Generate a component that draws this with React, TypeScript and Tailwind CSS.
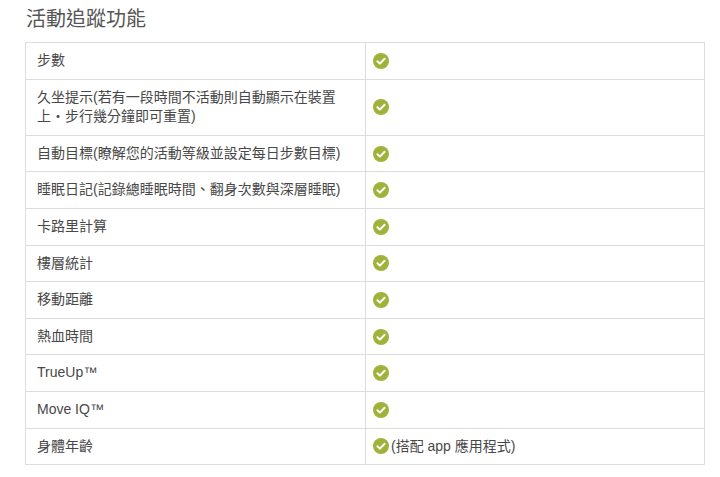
const ROWS: Array<{ label: string; note?: string }> = [
  { label: '步數' },
  { label: '久坐提示(若有一段時間不活動則自動顯示在裝置上・步行幾分鐘即可重置)' },
  { label: '自動目標(瞭解您的活動等級並設定每日步數目標)' },
  { label: '睡眠日記(記錄總睡眠時間、翻身次數與深層睡眠)' },
  { label: '卡路里計算' },
  { label: '樓層統計' },
  { label: '移動距離' },
  { label: '熱血時間' },
  { label: 'TrueUp™' },
  { label: 'Move IQ™' },
  { label: '身體年齡', note: '(搭配 app 應用程式)' },
];

function Check() {
  return (
    <svg width="16" height="16" viewBox="0 0 16 16" className="shrink-0">
      <circle cx="8" cy="8" r="8" fill="#a0b23a" />
      <path d="M4.4 8.2 L6.9 10.6 L11.6 5.8" fill="none" stroke="#fff" strokeWidth="2" strokeLinecap="round" strokeLinejoin="round" />
    </svg>
  );
}

export default function App() {
  return (
    <div
      className="w-[720px] h-[477px] bg-white overflow-hidden text-[#484848]"
      style={{ fontFamily: '"Liberation Sans", "Noto Sans CJK TC", sans-serif' }}
    >
      <h2 className="pl-[26px] pt-[5px] text-[20px] leading-[28px] text-[#555] font-normal">活動追蹤功能</h2>
      <table className="ml-[25px] mt-[9px] w-[680px] border-collapse table-fixed text-[14px] leading-[19.6px]">
        <tbody>
          {ROWS.map(r => (
            <tr key={r.label}>
              <td className="w-[340px] border border-[#ddd] py-[8px] pl-[11px] pr-[20px] align-top">{r.label}</td>
              <td className="border border-[#ddd] py-[8px] pl-[7px] pr-[8px] align-middle">
                <div className="flex items-center gap-[2px]">
                  <Check />
                  {r.note && <span>{r.note}</span>}
                </div>
              </td>
            </tr>
          ))}
        </tbody>
      </table>
    </div>
  );
}
